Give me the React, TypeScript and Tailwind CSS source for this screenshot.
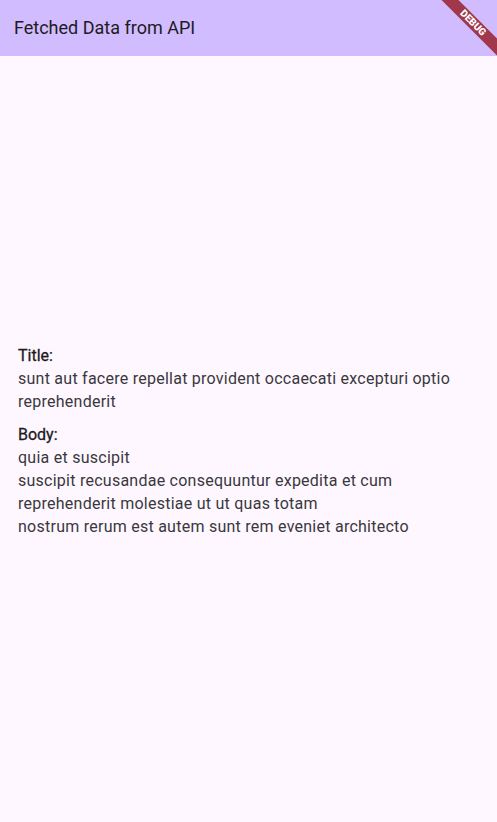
import React from "react"

const post = {
  title: "sunt aut facere repellat provident occaecati excepturi optio reprehenderit",
  body:
    "quia et suscipit\nsuscipit recusandae consequuntur expedita et cum\nreprehenderit molestiae ut ut quas totam\nnostrum rerum est autem sunt rem eveniet architecto",
}

export default function App() {
  return (
    <div className="relative w-full h-[822px] overflow-hidden bg-[#fef7ff] flex flex-col font-['Roboto',sans-serif] text-[#1d1b20]">
      {/* App bar */}
      <header className="h-14 shrink-0 bg-[#d1bcff] flex items-center px-[14px]">
        <h1 className="text-[18px] leading-none font-normal">Fetched Data from API</h1>
      </header>

      {/* Content */}
      <main className="flex-1 flex flex-col justify-center px-[18px] pt-1 text-[16px] leading-[23px] tracking-[0.25px]">
        <div className="text-[#1d1b20] tracking-normal [-webkit-text-stroke:0.3px_#1d1b20]">Title:</div>
        <div className="text-[#3a373d]">{post.title}</div>
        <div className="mt-[10px] text-[#1d1b20] tracking-normal [-webkit-text-stroke:0.3px_#1d1b20]">Body:</div>
        <div className="text-[#3a373d] whitespace-pre-line">{post.body}</div>
      </main>

      {/* Debug banner */}
      <div className="absolute top-[17px] left-[413px] w-[120px] h-3 rotate-45 bg-[#a0374a] flex items-center justify-center">
        <span className="text-[10px] leading-none font-black text-white">DEBUG</span>
      </div>
    </div>
  )
}
